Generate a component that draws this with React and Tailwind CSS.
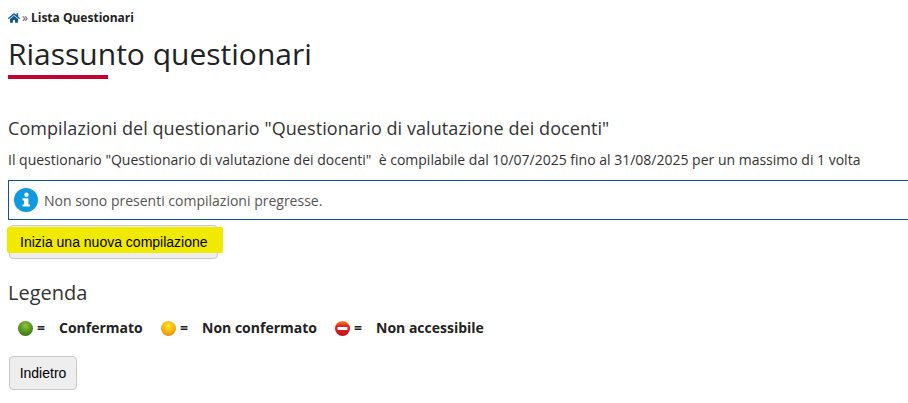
import React from "react";
import { FaHome } from "react-icons/fa";

const sans = "font-['Open_Sans',sans-serif]";
const arial = "font-['Liberation_Sans',Arial,sans-serif]";

function Ball({ id, hi, mid, lo }) {
  return (
    <svg width="15" height="15" viewBox="0 0 15 15" className="mt-[2px] block shrink-0">
      <defs>
        <radialGradient id={id} cx="0.5" cy="0.32" r="0.68">
          <stop offset="0" stopColor={hi} />
          <stop offset="0.5" stopColor={mid} />
          <stop offset="1" stopColor={lo} />
        </radialGradient>
      </defs>
      <circle cx="7.5" cy="7.5" r="7.5" fill={`url(#${id})`} />
    </svg>
  );
}

function NoEntry() {
  return (
    <svg width="15" height="15" viewBox="0 0 15 15" className="mt-[3px] block shrink-0">
      <defs>
        <linearGradient id="red" x1="0" y1="0" x2="0" y2="1">
          <stop offset="0" stopColor="#f08a20" />
          <stop offset="0.35" stopColor="#e02020" />
          <stop offset="1" stopColor="#c80f1a" />
        </linearGradient>
      </defs>
      <circle cx="7.5" cy="7.5" r="7.5" fill="url(#red)" />
      <rect x="2.5" y="6" width="10" height="3" fill="#fff" />
    </svg>
  );
}

function Item({ icon, label, className }) {
  return (
    <div className={`flex items-center ${className}`}>
      {icon}
      <span className="ml-[4px] w-[22px] text-[14px] font-bold">=</span>
      <span className="text-[14px] font-bold">{label}</span>
    </div>
  );
}

export default function App() {
  return (
    <div className={`${sans} h-[403px] w-[908px] overflow-hidden bg-white pl-2 pt-3 text-[#333]`}>
      <div className="flex h-[12px] items-center text-[12px] font-bold leading-none text-[#222]">
        <FaHome className="block text-[#0f5a94]" size={12} />
        <span className="ml-[2px] mr-[3px] font-normal text-[#555]">»</span>
        <span>Lista Questionari</span>
      </div>

      <h1 className="mt-[11px] h-[40px] text-[30px] font-normal leading-[38px] text-[#222]">Riassunto questionari</h1>
      <div className="h-[4px] w-[100px] bg-[#c4032e]" />

      <h2 className="mt-[36px] text-[18px] font-normal leading-[26px] tracking-[0.07px] text-[#333]">Compilazioni del questionario "Questionario di valutazione dei docenti"</h2>
      <p className="mt-[9px] whitespace-pre text-[14px] leading-[20px] text-[#333]">Il questionario "Questionario di valutazione dei docenti"  è compilabile dal 10/07/2025 fino al 31/08/2025 per un massimo di 1 volta</p>

      <div className="mt-[10px] flex h-[40px] items-center border border-r-0 border-[#0b5597] pl-[5px]">
        <svg width="24" height="24" viewBox="0 0 24 24" className="block shrink-0">
          <circle cx="12" cy="12" r="12" fill="#0f9ae0" />
          <circle cx="12.5" cy="6.8" r="2.2" fill="#fff" />
          <path d="M8.5 10.2 H14.4 V16.4 H16 V18.6 H8.5 V16.4 H10.1 V12.4 H8.5 Z" fill="#fff" />
        </svg>
        <span className="ml-[6px] text-[14px] text-[#555]">Non sono presenti compilazioni pregresse.</span>
      </div>

      <button className={`${arial} relative ml-[1px] mt-[5px] block h-[34px] w-[209px] rounded-[4px] border border-[#c8c8c8] bg-[#eeeeee] pl-[10px] text-left text-[14px] text-black`}>
        <span className="absolute left-[-3px] top-[1px] h-[26px] w-[216px] rounded-[2px] bg-[#f0e900] blur-[0.5px]" />
        <span className="relative">Inizia una nuova compilazione</span>
      </button>

      <h3 className="mt-[21px] text-[20px] font-normal leading-[26px] text-[#333]">Legenda</h3>

      <div className="mt-[11px] flex h-[20px] items-center pl-[10px] text-[#222]">
        <Item className="w-[143px]" icon={<Ball id="g" hi="#8fc640" mid="#5f9c20" lo="#3a7414" />} label="Confermato" />
        <Item className="w-[174px]" icon={<Ball id="y" hi="#ffe92e" mid="#f8bb12" lo="#e09212" />} label="Non confermato" />
        <Item icon={<NoEntry />} label="Non accessibile" />
      </div>

      <button className={`${arial} ml-[1px] mt-[19px] block h-[34px] w-[68px] rounded-[4px] border border-[#c8c8c8] bg-[#eeeeee] text-center text-[14px] text-black`}>Indietro</button>
    </div>
  );
}
